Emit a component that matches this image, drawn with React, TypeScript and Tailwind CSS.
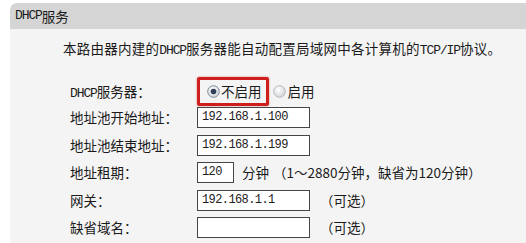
const cjk = '"Noto Sans CJK SC", "Liberation Sans", sans-serif'

function Latin({ children }: { children: React.ReactNode }) {
  return <span className="font-['Liberation_Mono',monospace] text-[13px] tracking-[-1.1px]">{children}</span>
}

function Radio({ checked }: { checked?: boolean }) {
  return (
    <svg width="13" height="13" viewBox="0 0 13 13" className="shrink-0">
      <defs>
        <radialGradient id={checked ? 'rg1' : 'rg2'} cx="40%" cy="35%" r="70%">
          <stop offset="0%" stopColor="#ffffff" />
          <stop offset="100%" stopColor="#cfd3d8" />
        </radialGradient>
      </defs>
      <circle cx="6.5" cy="6.5" r="5.8" fill={`url(#${checked ? 'rg1' : 'rg2'})`} stroke={checked ? '#7d8896' : '#b4b8bd'} strokeWidth="1" />
      {checked && <circle cx="6.5" cy="6.5" r="2.8" fill="#2f3f5a" />}
    </svg>
  )
}

function Field({ value, w = 'w-[113px]' }: { value?: string; w?: string }) {
  return (
    <div className={`${w} h-[21px] shrink-0 border border-[#454545] bg-white pl-[4px] text-[12px] tracking-[-0.6px] leading-[19px] text-[#222] font-['Liberation_Mono',monospace]`}>
      {value}
    </div>
  )
}

function Row({ label, children }: { label: string; children: React.ReactNode }) {
  return (
    <div className="flex h-[27.5px] items-start">
      <div className="w-[127px] shrink-0 leading-[21px]">{label}</div>
      <div className="flex items-center gap-[8px] leading-[21px]">{children}</div>
    </div>
  )
}

export default function App() {
  return (
    <div
      className="h-[243px] w-[526px] overflow-hidden bg-white pl-[10px] pt-[3px] text-[13.5px] text-[#1a1a1a]"
      style={{ fontFamily: cjk }}
    >
      <div className="flex h-[26px] items-center rounded-tl-[7px] bg-[#d5d5d5] pl-[5px] text-[13.5px]">
        <Latin>DHCP</Latin>服务
      </div>
      <div className="h-full bg-[#f4f4f4] pt-[9px]">
        <p className="pl-[53px] leading-[20px] tracking-[0.25px] whitespace-nowrap">
          本路由器内建的<Latin>DHCP</Latin>服务器能自动配置局域网中各计算机的<Latin>TCP/IP</Latin>协议。
        </p>
        <div className="mt-[16px] pl-[60px]">
          <div className="flex h-[30px] items-start">
            <div className="w-[127px] shrink-0 pt-[4px] leading-[21px]">
              <Latin>DHCP</Latin>服务器：
            </div>
            <div className="flex h-[29px] items-center">
              <div className="flex h-[29px] items-center gap-[1px] rounded-[2px] border-[3px] border-[#cf1f1c] pr-[4px] pl-[7px] shadow-[0_0_2px_rgba(180,0,0,0.5)]">
                <Radio checked />
                <span>不启用</span>
              </div>
              <div className="ml-[4px] flex items-center gap-[2px]">
                <Radio />
                <span>启用</span>
              </div>
            </div>
          </div>
          <Row label="地址池开始地址：">
            <Field value="192.168.1.100" />
          </Row>
          <Row label="地址池结束地址：">
            <Field value="192.168.1.199" />
          </Row>
          <Row label="地址租期：">
            <Field value="120" w="w-[37px]" />
            <span>分钟</span>
            <span className="-ml-[4px]">（1～2880分钟，缺省为120分钟）</span>
          </Row>
          <Row label="网关：">
            <Field value="192.168.1.1" />
            <span className="ml-[2px]">（可选）</span>
          </Row>
          <Row label="缺省域名：">
            <Field />
            <span className="ml-[2px]">（可选）</span>
          </Row>
          <Row label="">
            <Field />
          </Row>
        </div>
      </div>
    </div>
  )
}
